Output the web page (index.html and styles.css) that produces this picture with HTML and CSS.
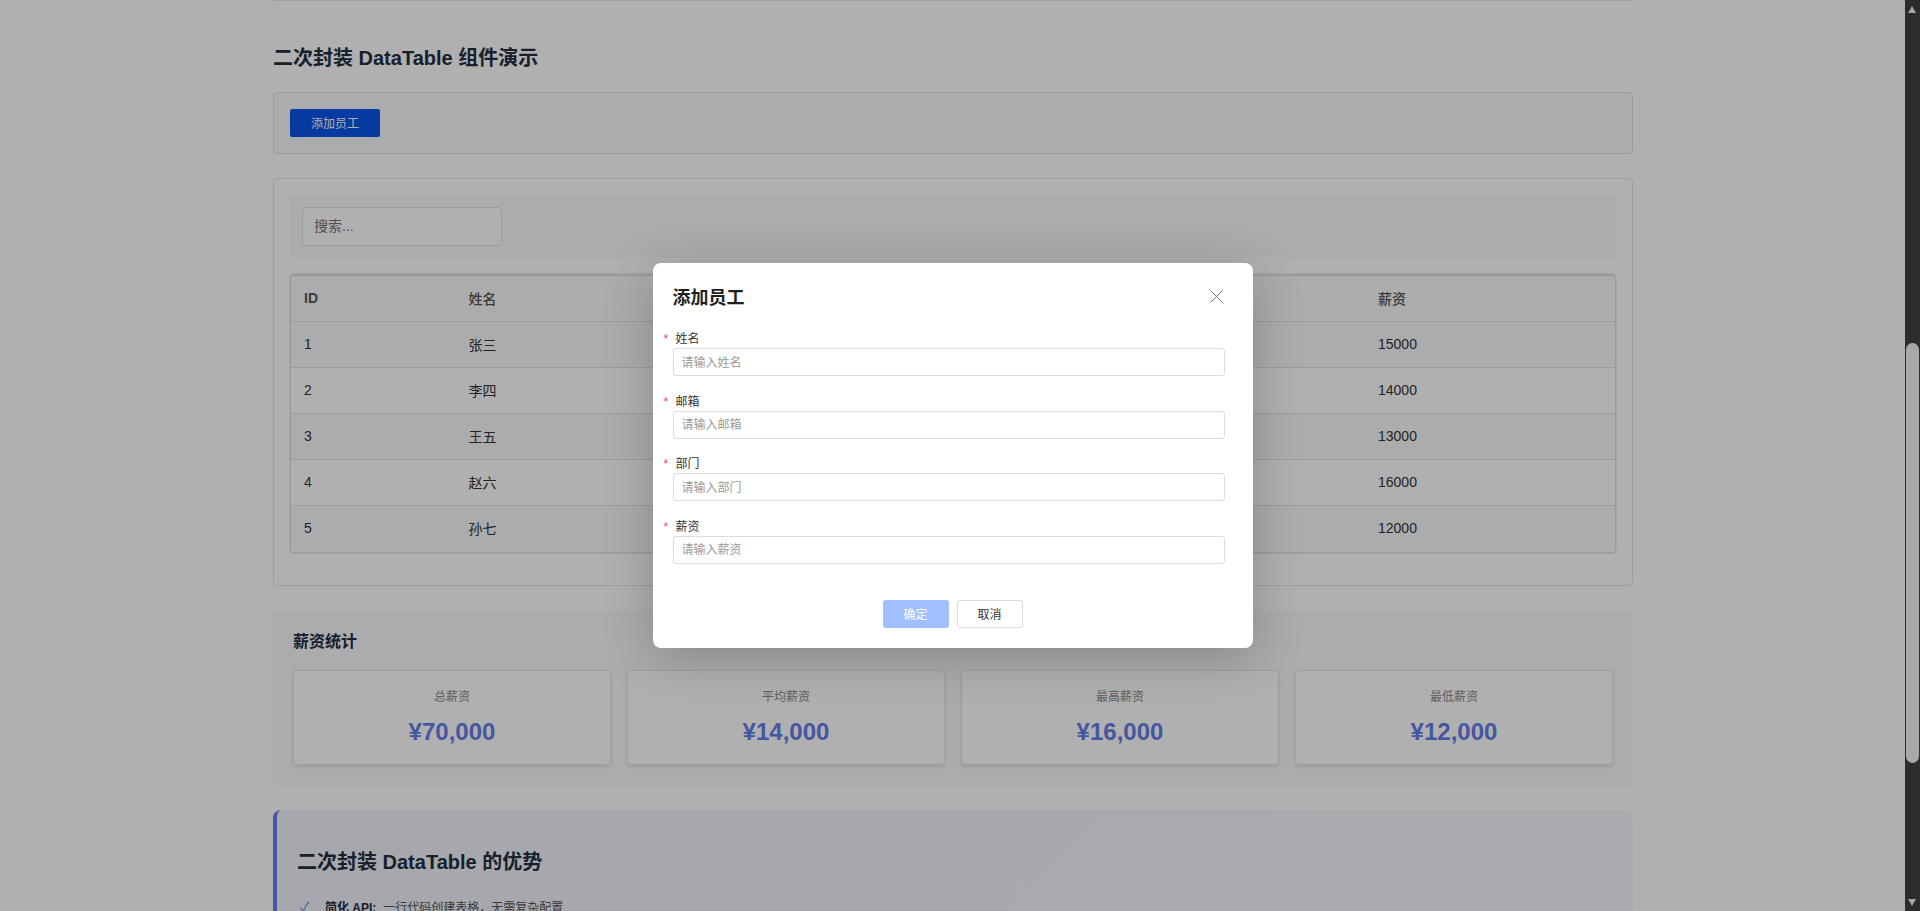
FILE: index.html
```html
<!DOCTYPE html>
<html lang="zh-CN">
<head>
<meta charset="utf-8">
<title>二次封装 DataTable 组件演示</title>
<link rel="stylesheet" href="styles.css">
</head>
<body>
<div class="window">
  <div class="viewport">
    <main class="page">
      <section class="demo">
        <h2 class="demo-title">二次封装 DataTable 组件演示</h2>
        <div class="toolbar"><button class="btn-primary" type="button">添加员工</button></div>
        <div class="table-card">
          <div class="search-bar"><input class="search-input" type="text" placeholder="搜索..."></div>
          <div class="table-wrap">
            <table class="data-table">
              <colgroup><col class="c-id"><col class="c-name"><col class="c-mail"><col class="c-dept"><col class="c-pay"></colgroup>
              <thead><tr><th class="first">ID</th><th>姓名</th><th>邮箱</th><th>部门</th><th>薪资</th></tr></thead>
              <tbody>
                <tr><td>1</td><td>张三</td><td>zhangsan@example.com</td><td>技术部</td><td>15000</td></tr>
                <tr><td>2</td><td>李四</td><td>lisi@example.com</td><td>产品部</td><td>14000</td></tr>
                <tr><td>3</td><td>王五</td><td>wangwu@example.com</td><td>设计部</td><td>13000</td></tr>
                <tr><td>4</td><td>赵六</td><td>zhaoliu@example.com</td><td>技术部</td><td>16000</td></tr>
                <tr><td>5</td><td>孙七</td><td>sunqi@example.com</td><td>市场部</td><td>12000</td></tr>
              </tbody>
            </table>
          </div>
        </div>
        <div class="stats">
          <h3 class="stats-title">薪资统计</h3>
          <div class="stats-grid">
            <div class="stat-card"><div class="stat-label">总薪资</div><div class="stat-value">¥70,000</div></div>
            <div class="stat-card"><div class="stat-label">平均薪资</div><div class="stat-value">¥14,000</div></div>
            <div class="stat-card"><div class="stat-label">最高薪资</div><div class="stat-value">¥16,000</div></div>
            <div class="stat-card"><div class="stat-label">最低薪资</div><div class="stat-value">¥12,000</div></div>
          </div>
        </div>
        <div class="advantages">
          <h3 class="adv-title">二次封装 DataTable 的优势</h3>
          <ul class="adv-list">
            <li class="adv-item"><span class="adv-check">✓</span><strong class="adv-strong">简化 API:</strong><span>一行代码创建表格，无需复杂配置</span></li>
          </ul>
        </div>
      </section>
    </main>
    <div class="mask">
      <div class="dialog">
        <div class="dialog-head">
          <div class="dialog-title">添加员工</div>
          <svg class="dialog-close" viewBox="0 0 13 13" width="13" height="13" aria-hidden="true"><path d="M.5.5l12 12M12.5.5l-12 12"/></svg>
        </div>
        <form class="form">
          <div class="form-item"><label class="form-label">姓名</label><input class="form-input" type="text" placeholder="请输入姓名"></div>
          <div class="form-item"><label class="form-label">邮箱</label><input class="form-input" type="text" placeholder="请输入邮箱"></div>
          <div class="form-item"><label class="form-label">部门</label><input class="form-input" type="text" placeholder="请输入部门"></div>
          <div class="form-item"><label class="form-label">薪资</label><input class="form-input" type="text" placeholder="请输入薪资"></div>
        </form>
        <div class="dialog-foot">
          <button class="dlg-btn dlg-ok" type="button">确定</button>
          <button class="dlg-btn dlg-cancel" type="button">取消</button>
        </div>
      </div>
    </div>
  </div>
  <div class="scrollbar" aria-hidden="true">
    <div class="sb-up"></div>
    <div class="sb-track"><div class="sb-thumb"></div></div>
    <div class="sb-down"></div>
  </div>
</div>
</body>
</html>
```
FILE: styles.css
```css
* { box-sizing: border-box; }
html, body { margin: 0; height: 100%; overflow: hidden; }
body {
  font-family: "Liberation Sans", "Noto Sans CJK SC", sans-serif;
  font-size: 14px;
  color: #333;
  background: #fff;
}
.window { display: flex; width: 1920px; height: 911px; }
.viewport { position: relative; flex: 1; min-width: 0; height: 911px; overflow: hidden; }
.page { padding: 0 272px 0 273px; }
.demo { border-top: 1px solid #e5e7eb; padding-top: 43px; }
.demo-title { margin: 0 0 20px; font-size: 20px; line-height: 28px; font-weight: 700; color: #232f40; }

.toolbar { height: 62px; padding: 16px; border: 1px solid #e0e0e6; border-radius: 4px; background: #f8f9fb; }
.btn-primary { display: block; width: 90px; height: 28px; padding: 0 0 2px; border: 0; border-radius: 2px; background: #0a54e8; color: #fff; font: 12px "Liberation Sans", "Noto Sans CJK SC", sans-serif; }

.table-card { margin-top: 24px; padding: 16px; border: 1px solid #e5e5ea; border-radius: 4px; background: #fff; }
.search-bar { padding: 12px; background: #f8f9fb; border-radius: 3px; }
.search-input { display: block; width: 200px; height: 39px; padding: 0 11px 2px; border: 1px solid #e0e0e6; border-radius: 4px; background: #fff; font: 14px "Liberation Sans", "Noto Sans CJK SC", sans-serif; color: #333; }
.search-input::placeholder { color: #757575; }
.table-wrap { margin: 16px 0; border: 1px solid #dcdfe6; border-top-width: 2px; border-radius: 4px; box-shadow: 0 0 0 .5px #dcdfe6; overflow: hidden; }
.data-table { width: 100%; border-collapse: separate; border-spacing: 0; table-layout: fixed; font-size: 14px; }
.c-id { width: 164.5px; }
.c-name { width: 200px; }
.c-mail { width: 300px; }
.c-dept { width: 409.5px; }
.c-pay { width: 250px; }
.data-table th, .data-table td { height: 46px; padding: 0 13px 2px; text-align: left; border-bottom: 1px solid #dfe2e8; }
.data-table th { font-weight: 500; color: #555; background: #f8f9fb; }
.data-table th.first { font-weight: 700; }
.data-table td { color: #333; font-weight: 400; }
.data-table tbody tr:nth-child(odd) td { background: #f8f9fb; }
.data-table tbody tr:last-child td { border-bottom: 0; }

.stats { margin-top: 24px; padding: 20px 20px 21px; background: #f8f9fb; border-radius: 4px; }
.stats-title { margin: 0 0 17px; font-size: 16px; line-height: 23px; font-weight: 700; color: #232f40; }
.stats-grid { display: grid; grid-template-columns: repeat(4, 1fr); gap: 16px; }
.stat-card { height: 95px; padding-top: 17px; text-align: center; background: #fff; border: 1px solid #e5e7ee; border-radius: 4px; box-shadow: 0 2px 4px rgba(0,0,0,.1); }
.stat-label { font-size: 12px; line-height: 18px; color: #888; }
.stat-value { margin-top: 12px; font-size: 24px; line-height: 28px; font-weight: 700; color: #667eea; }

.advantages { margin-top: 24px; padding: 38px 20px 0; height: 300px; border-left: 4px solid #667eea; border-radius: 8px; background: linear-gradient(135deg, #f1f3fd 0%, #f4f8fc 100%); }
.adv-title { margin: 0 0 15px; font-size: 20px; line-height: 28px; font-weight: 700; color: #232f40; }
.adv-list { margin: 0; padding: 0; list-style: none; }
.adv-item { display: flex; align-items: center; height: 30px; font-size: 12px; color: #555; }
.adv-check { width: 28px; padding-left: 3px; color: #667eea; font-size: 14px; }
.adv-strong { margin-right: 7px; color: #232f40; font-weight: 700; }

.mask { position: absolute; inset: 0; z-index: 10; display: flex; align-items: center; justify-content: center; background: rgba(0,0,0,.31); }
.dialog { width: 600px; height: 385px; padding: 20px; border-radius: 8px; background: #fff; box-shadow: 0 10px 50px rgba(0,0,0,.22); }
.dialog-head { display: flex; align-items: center; justify-content: space-between; height: 27px; margin-bottom: 20px; padding-right: 10px; }
.dialog-title { padding-bottom: 2px; font-size: 18px; font-weight: 700; color: #1f1f1f; }
.dialog-close { fill: none; stroke: #6b6f7a; stroke-width: 1; }
.form { width: 552px; }
.form-item { height: 62.67px; }
.form-label { display: block; position: relative; height: 18px; padding-left: 3px; font-size: 12px; line-height: 18px; color: #333; }
.form-label::before { content: "*"; position: absolute; left: -9px; top: 0; color: #f5484f; font-size: 12px; }
.form-input { display: block; width: 100%; height: 28px; padding: 1px 8px 0; border: 1px solid #dcdcdc; border-radius: 3px; background: #fff; font: 12px "Liberation Sans", "Noto Sans CJK SC", sans-serif; color: #333; }
.form-input::placeholder { color: #9a9a9a; }
.dialog-foot { display: flex; justify-content: center; gap: 8px; margin-top: 19px; }
.dlg-btn { width: 66px; height: 28px; padding: 0; border-radius: 3px; font: 12px "Liberation Sans", "Noto Sans CJK SC", sans-serif; }
.dlg-ok { border: 0; background: #a0bfff; color: #fff; }
.dlg-cancel { border: 1px solid #dcdcdc; background: #fff; color: #333; }

.scrollbar { display: flex; flex-direction: column; flex: 0 0 15px; height: 911px; background: #2c2c2c; }
.sb-up, .sb-down { flex: 0 0 17px; position: relative; }
.sb-up::after { content: ""; position: absolute; left: 3px; top: 6px; border: 4.5px solid transparent; border-top: 0; border-bottom: 7px solid #a3a3a3; }
.sb-down::after { content: ""; position: absolute; left: 3px; bottom: 5px; border: 4.5px solid transparent; border-bottom: 0; border-top: 7px solid #a3a3a3; }
.sb-track { flex: 1; padding: 326px 1px 131px; }
.sb-thumb { height: 100%; border-radius: 7px; background: #a8a8a8; }
```
